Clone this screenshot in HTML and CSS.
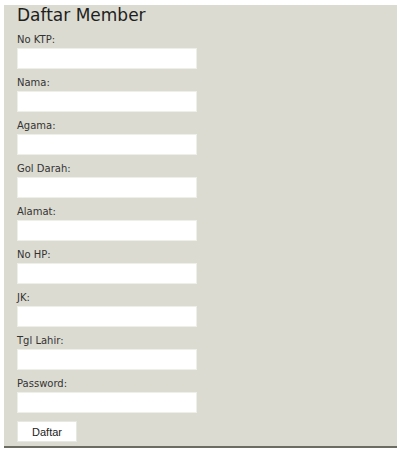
FILE: index.html
```html
<!DOCTYPE html>
<html lang="id">
<head>
    <meta charset="UTF-8">
    <meta name="viewport" content="width=device-width, initial-scale=1.0">
    <title>Daftar Member</title>
    <link rel="stylesheet" href="styles.css">
</head>
<body>
    <div class="panel">
        <h2>Daftar Member</h2>
        <form id="formDaftar">
            <div class="field">
                <label for="ktp">No KTP:</label>
                <input type="text" id="ktp" name="ktp">
            </div>
            <div class="field">
                <label for="nama">Nama:</label>
                <input type="text" id="nama" name="nama">
            </div>
            <div class="field">
                <label for="agama">Agama:</label>
                <input type="text" id="agama" name="agama">
            </div>
            <div class="field">
                <label for="goldarah">Gol Darah:</label>
                <input type="text" id="goldarah" name="goldarah">
            </div>
            <div class="field">
                <label for="alamat">Alamat:</label>
                <input type="text" id="alamat" name="alamat">
            </div>
            <div class="field">
                <label for="hp">No HP:</label>
                <input type="text" id="hp" name="hp">
            </div>
            <div class="field">
                <label for="jk">JK:</label>
                <input type="text" id="jk" name="jk">
            </div>
            <div class="field">
                <label for="tgllahir">Tgl Lahir:</label>
                <input type="text" id="tgllahir" name="tgllahir">
            </div>
            <div class="field">
                <label for="password">Password:</label>
                <input type="password" id="password" name="password">
            </div>
            <button type="submit">Daftar</button>
        </form>
    </div>
</body>
</html>
```

FILE: styles.css
```css
body {
    margin: 0;
    padding: 0;
    background-color: #fff;
    font-family: "DejaVu Sans", Verdana, sans-serif;
}

.panel {
    margin: 5px 6px 0 4px;
    padding: 0 13px 4px;
    background-color: #dcdbd1;
    border-bottom: 2px solid #6c6c63;
}

h2 {
    margin: 0 0 9px;
    font-size: 17px;
    line-height: 20px;
    font-weight: normal;
    color: #1e1e1e;
}

.field {
    margin-bottom: 8px;
}

label {
    display: block;
    margin-bottom: 2px;
    font-size: 10px;
    line-height: 12px;
    color: #333;
}

input {
    display: block;
    width: 180px;
    height: 21px;
    margin: 0;
    padding: 0 4px;
    border: 1px solid #efefea;
    background-color: #fff;
    box-sizing: border-box;
}

button {
    display: block;
    width: 60px;
    height: 21px;
    margin: 0;
    padding: 0;
    border: 1px solid #e8e8e2;
    background-color: #fff;
    font-family: "Liberation Sans", Arial, sans-serif;
    font-size: 11px;
    color: #222;
}
```
